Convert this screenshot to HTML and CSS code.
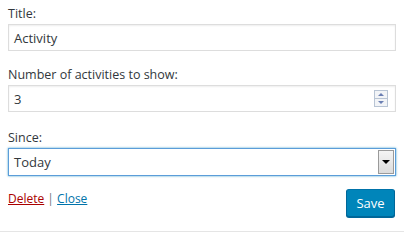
FILE: index.html
```html
<!DOCTYPE html>
<html>
<head>
<meta charset="utf-8">
<link rel="stylesheet" href="styles.css">
</head>
<body>
<div class="widget">
  <div class="field">
    <label class="lbl">Title:</label>
    <div class="box"><span class="val">Activity</span></div>
  </div>
  <div class="field">
    <label class="lbl">Number of activities to show:</label>
    <div class="box box-num">
      <span class="val">3</span>
      <span class="spin">
        <span class="spin-btn"><span class="tri-up"></span></span>
        <span class="spin-btn"><span class="tri-down"></span></span>
      </span>
    </div>
  </div>
  <div class="field field-since">
    <label class="lbl">Since:</label>
    <div class="box box-select">
      <span class="val">Today</span>
      <span class="drop"><span class="tri-black"></span></span>
    </div>
  </div>
  <div class="actions">
    <div class="links"><a class="del" href="#">Delete</a> <span class="sep">|</span> <a class="close" href="#">Close</a></div>
    <button class="save">Save</button>
  </div>
</div>
</body>
</html>
```
FILE: styles.css
```css
html, body {
  margin: 0;
  padding: 0;
  background: #fff;
}
body {
  font-family: "Open Sans", "Noto Sans", sans-serif;
  font-size: 12.5px;
  color: #32373c;
}
.widget {
  width: 404px;
  height: 232px;
  box-sizing: border-box;
  padding: 5px 8px 0 8px;
  border-bottom: 1px solid #e5e5e5;
  display: flex;
  flex-direction: column;
}
.field {
  display: flex;
  flex-direction: column;
  width: 388px;
}
.field + .field {
  margin-top: 15px;
}
.field-since {
  margin-top: 17px !important;
}
.lbl {
  line-height: 18px;
  color: #32373c;
}
.box {
  margin-top: 1px;
  height: 27px;
  box-sizing: border-box;
  border: 1px solid #ddd;
  box-shadow: inset 0 1px 2px rgba(0,0,0,0.07);
  display: flex;
  align-items: center;
  padding-left: 5px;
  background: #fff;
}
.val {
  flex: 1;
  font-size: 13px;
  color: #32373c;
}
.box-num {
  padding-right: 7px;
}
.spin {
  display: flex;
  flex-direction: column;
  width: 14px;
  height: 17px;
  border: 1px solid #b8c4d4;
  box-sizing: border-box;
  background: #f2f4f7;
}
.spin-btn {
  flex: 1;
  display: flex;
  align-items: center;
  justify-content: center;
}
.spin-btn + .spin-btn {
  border-top: 1px solid #b8c4d4;
}
.tri-up {
  width: 0; height: 0;
  border-left: 3px solid transparent;
  border-right: 3px solid transparent;
  border-bottom: 3px solid #6b7fb3;
}
.tri-down {
  width: 0; height: 0;
  border-left: 3px solid transparent;
  border-right: 3px solid transparent;
  border-top: 3px solid #6b7fb3;
}
.box-select {
  height: 28px;
  border-color: #5b9dd9;
  box-shadow: 0 0 2px rgba(30,140,190,0.8);
  padding-right: 1px;
}
.drop {
  width: 16px;
  height: 24px;
  box-sizing: border-box;
  border: 1px solid #9a9a9a;
  background: linear-gradient(#f4f4f4, #dcdcdc);
  display: flex;
  align-items: center;
  justify-content: center;
}
.tri-black {
  width: 0; height: 0;
  border-left: 4px solid transparent;
  border-right: 4px solid transparent;
  border-top: 4px solid #000;
}
.actions {
  margin-top: 13px;
  width: 388px;
  display: flex;
  justify-content: space-between;
  align-items: flex-start;
}
.links {
  line-height: 18px;
  margin-top: 1px;
  font-size: 12px;
}
.del {
  color: #a00;
  text-decoration: underline;
}
.sep {
  color: #72777c;
}
.close {
  color: #0073aa;
  text-decoration: underline;
}
.save {
  margin-right: 1px;
  width: 49px;
  height: 28px;
  box-sizing: border-box;
  background: #0085ba;
  border: 1px solid #0073aa;
  border-color: #0073aa #006799 #006799;
  border-radius: 3px;
  box-shadow: 0 1px 0 #006799;
  color: #fff;
  font-family: inherit;
  font-size: 13px;
  padding: 0;
}
```
